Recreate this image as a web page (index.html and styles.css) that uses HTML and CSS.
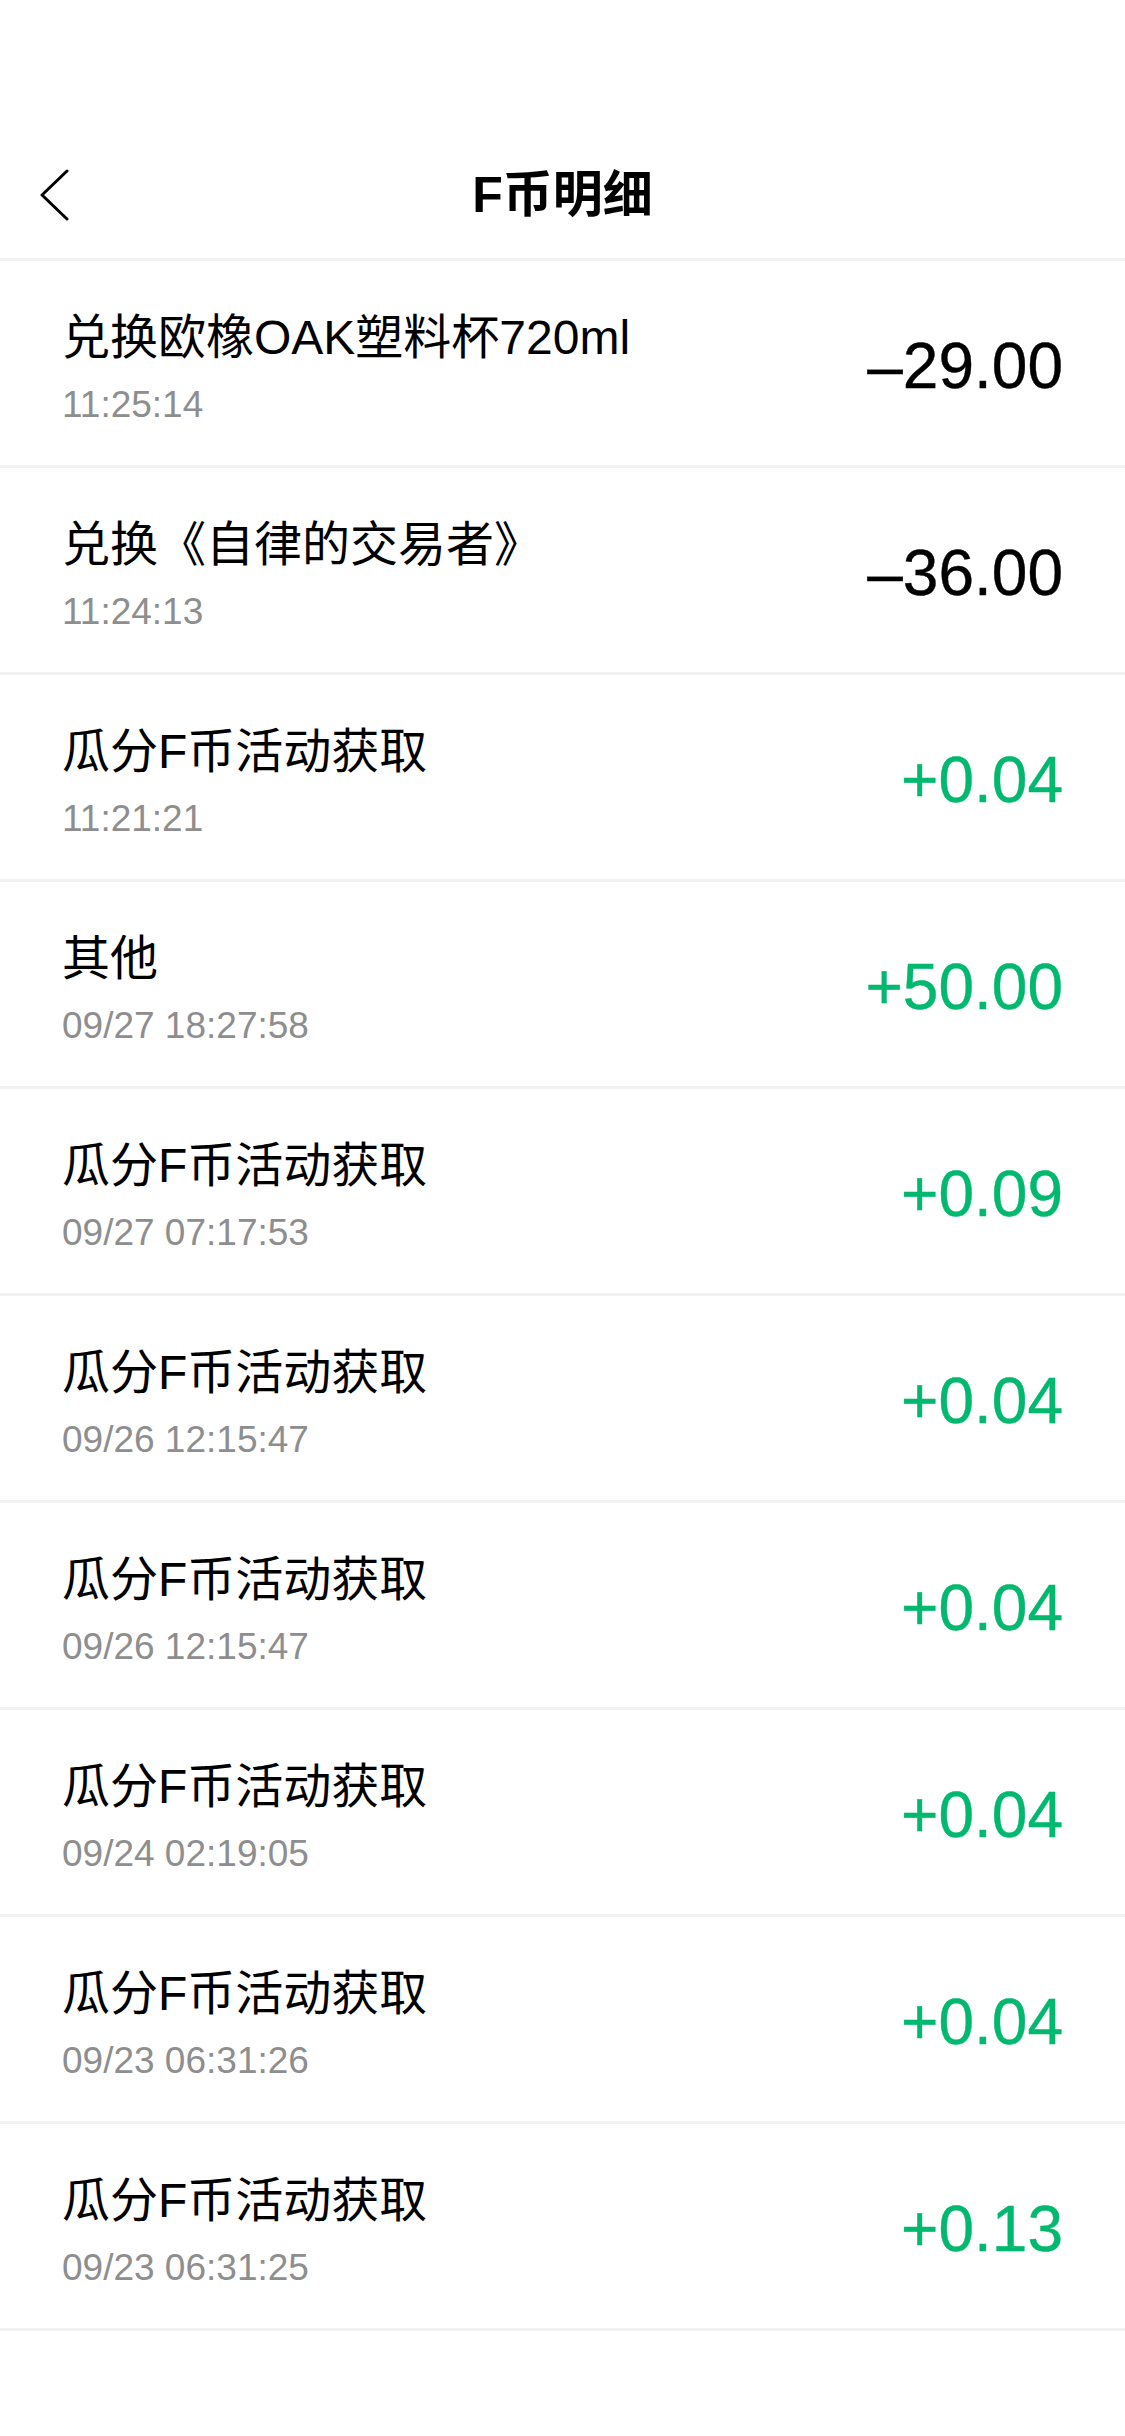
FILE: index.html
```html
<!DOCTYPE html>
<html lang="zh-CN">
<head>
<meta charset="utf-8">
<title>F币明细</title>
<link rel="stylesheet" href="styles.css">
</head>
<body>
<div class="screen">
  <div class="status-bar"></div>
  <header class="nav">
    <div class="nav-left">
      <svg class="back" width="30" height="52" viewBox="0 0 30 52" aria-hidden="true">
        <polyline points="27,2 2,26 27,50" fill="none" stroke="#000" stroke-width="3" stroke-linecap="round" stroke-linejoin="round"/>
      </svg>
    </div>
    <h1 class="nav-title">F币明细</h1>
    <div class="nav-right"></div>
  </header>
  <ul class="list">
    <li class="row"><div class="info"><div class="name">兑换欧橡OAK塑料杯720ml</div><div class="time">11:25:14</div></div><div class="amount minus">–29.00</div></li>
    <li class="row"><div class="info"><div class="name">兑换《自律的交易者》</div><div class="time">11:24:13</div></div><div class="amount minus">–36.00</div></li>
    <li class="row"><div class="info"><div class="name">瓜分F币活动获取</div><div class="time">11:21:21</div></div><div class="amount plus">+0.04</div></li>
    <li class="row"><div class="info"><div class="name">其他</div><div class="time">09/27 18:27:58</div></div><div class="amount plus">+50.00</div></li>
    <li class="row"><div class="info"><div class="name">瓜分F币活动获取</div><div class="time">09/27 07:17:53</div></div><div class="amount plus">+0.09</div></li>
    <li class="row"><div class="info"><div class="name">瓜分F币活动获取</div><div class="time">09/26 12:15:47</div></div><div class="amount plus">+0.04</div></li>
    <li class="row"><div class="info"><div class="name">瓜分F币活动获取</div><div class="time">09/26 12:15:47</div></div><div class="amount plus">+0.04</div></li>
    <li class="row"><div class="info"><div class="name">瓜分F币活动获取</div><div class="time">09/24 02:19:05</div></div><div class="amount plus">+0.04</div></li>
    <li class="row"><div class="info"><div class="name">瓜分F币活动获取</div><div class="time">09/23 06:31:26</div></div><div class="amount plus">+0.04</div></li>
    <li class="row"><div class="info"><div class="name">瓜分F币活动获取</div><div class="time">09/23 06:31:25</div></div><div class="amount plus">+0.13</div></li>
  </ul>
</div>
</body>
</html>
```

FILE: styles.css
```css
* { box-sizing: border-box; }
html, body {
  margin: 0;
  padding: 0;
  background: #fff;
}
body {
  font-family: "Liberation Sans", "Noto Sans CJK SC", sans-serif;
  color: #000;
}
.screen {
  width: 1125px;
  min-height: 2436px;
  background: #fff;
}
.status-bar {
  height: 132px;
}
.nav {
  display: grid;
  grid-template-columns: 1fr auto 1fr;
  align-items: center;
  border-bottom: 3px solid #f2f2f2;
  height: 129px;
}
.nav-left {
  padding-left: 40px;
  display: flex;
  align-items: center;
}
.back { display: block; }
.nav-title {
  margin: 0;
  font-size: 50px;
  font-weight: 700;
  line-height: 60px;
  letter-spacing: 0;
}
.list {
  list-style: none;
  margin: 0;
  padding: 0;
}
.row {
  height: 207px;
  display: flex;
  align-items: center;
  justify-content: space-between;
  padding: 0 62px;
  border-bottom: 3px solid #f2f2f2;
}
.info {
  display: flex;
  flex-direction: column;
  gap: 17px;
  padding-top: 9px;
}
.name {
  font-size: 48px;
  line-height: 58px;
  color: #000;
}
.time {
  font-size: 37px;
  line-height: 42px;
  color: #8e8e8e;
}
.amount {
  font-size: 64px;
  line-height: 72px;
  padding-top: 6px;
  -webkit-text-stroke: 0.4px currentColor;
}
.amount.minus { color: #000; }
.amount.plus { color: #00b86e; }
```
